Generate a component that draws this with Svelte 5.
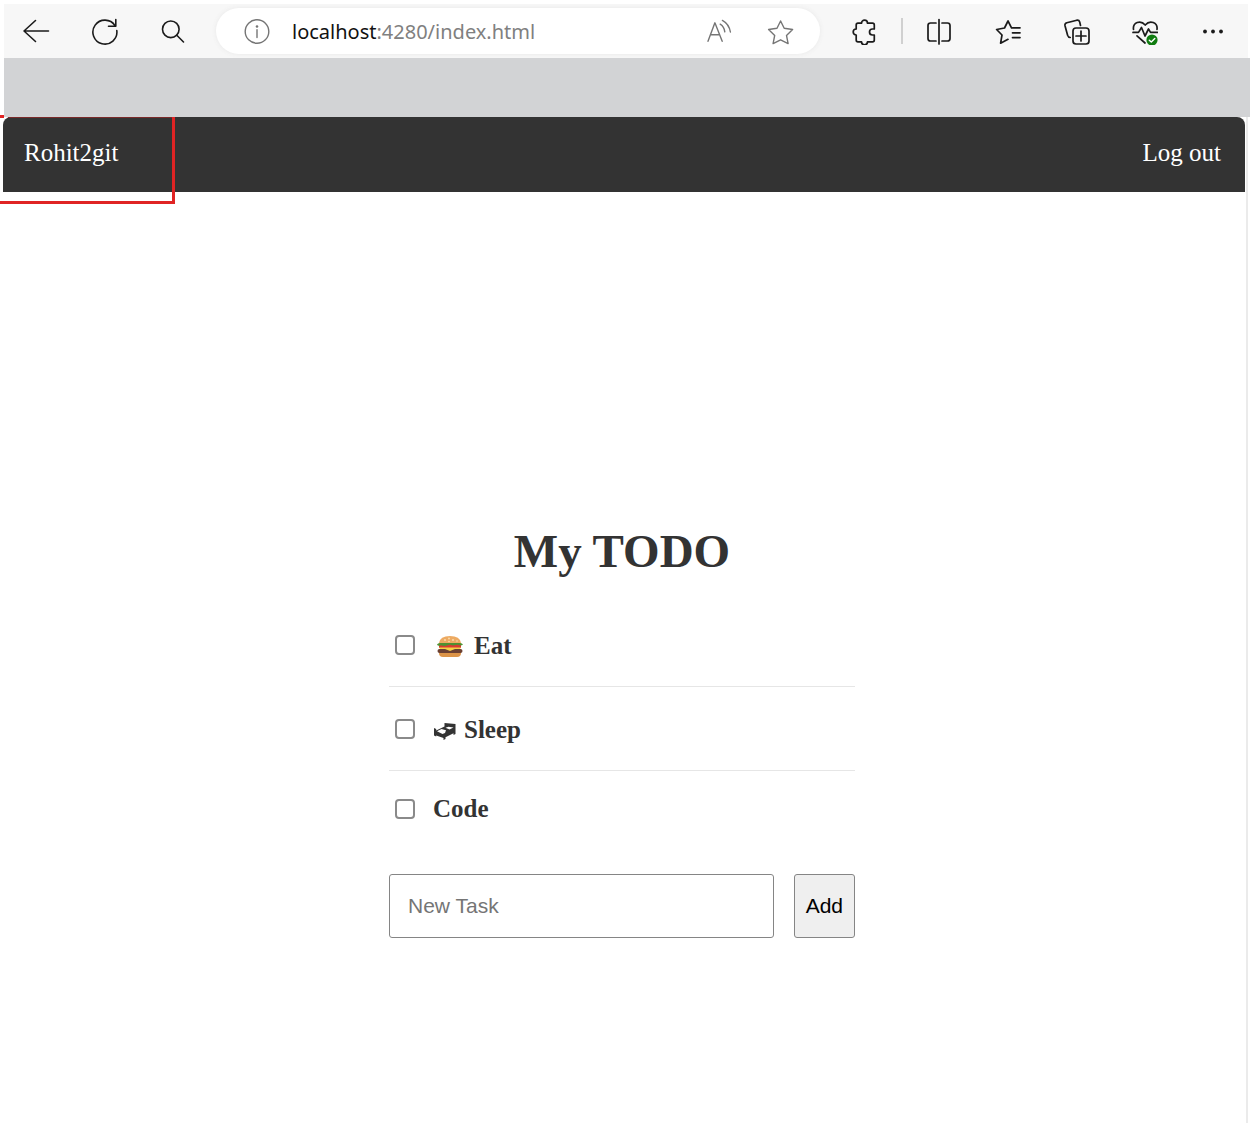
<script>
  let tasks = $state([
    { id: 1, title: 'Eat', icon: 'burger', done: false },
    { id: 2, title: 'Sleep', icon: 'bed', done: false },
    { id: 3, title: 'Code', icon: '', done: false }
  ]);
  let draft = $state('');

  function addTask(event) {
    event.preventDefault();
    const title = draft.trim();
    if (!title) return;
    tasks.push({ id: tasks.length + 1, title, icon: '', done: false });
    draft = '';
  }
</script>

<div class="page">
  <header class="toolbar">
    <button class="tool" aria-label="Back">
      <svg viewBox="0 0 28 28"><path d="M26.500 14H2M13.500 3.500L2 14L13.500 24.500" /></svg>
    </button>
    <button class="tool" aria-label="Refresh">
      <svg viewBox="0 0 28 28"><path d="M26.800 13.500A12 12 0 1 1 25 8.600M25.800 2.500V9.200H18.500" /></svg>
    </button>
    <button class="tool" aria-label="Search">
      <svg viewBox="0 0 28 28"><circle cx="12.800" cy="12.300" r="8.300" /><path d="M18.800 18.300L25.500 25" /></svg>
    </button>

    <div class="address">
      <svg class="muted" viewBox="0 0 28 28">
        <circle cx="14" cy="14.500" r="11.800" />
        <path d="M14 12.800V20.500" />
        <circle class="dot" cx="14" cy="9.500" r="1.300" />
      </svg>
      <a class="url" href="#top"><span class="host">localhost</span>:4280/index.html</a>
      <button class="tool small" aria-label="Read aloud">
        <svg class="muted" viewBox="0 0 28 28">
          <path d="M3 24.300L9.900 5.800L17.200 24.300M5.600 17.700H14.600M15.200 7.200Q19.200 9.800 19.800 14.800M17.400 3.400Q24 7 25.400 15" />
        </svg>
      </button>
      <button class="tool small" aria-label="Add to favorites">
        <svg class="muted" viewBox="0 0 28 28">
          <path d="M14.600 4L18.200 11.300L26.600 12.500L20.500 18.400L22.100 26.600L14.600 22.800L7.100 26.600L8.700 18.400L2.600 12.500L11 11.300Z" />
        </svg>
      </button>
    </div>

    <div class="extensions">
      <button class="tool" aria-label="Extensions">
        <svg class="strong" viewBox="0 0 28 28">
          <path d="M8 6.200H11.500A3 3 0 0 1 17.500 6.200H22.500Q24.300 6.200 24.300 8V12H22.500A3 3 0 0 0 22.500 18H24.300V23Q24.300 24.800 22.500 24.800H17.500A3 3 0 0 1 11.500 24.800H8Q6.200 24.800 6.200 23V18A3 3 0 0 1 6.200 12V8Q6.200 6.200 8 6.200Z" />
        </svg>
      </button>
      <span class="divider"></span>
      <button class="tool" aria-label="Split screen">
        <svg class="strong" viewBox="0 0 28 28">
          <path d="M10 6H4.500Q2 6 2 8.500V21.500Q2 24 4.500 24H10M13 2.500V27M16 6H21.500Q24 6 24 8.500V21.500Q24 24 21.500 24H16" />
        </svg>
      </button>
    </div>
    <button class="tool" aria-label="Favorites">
      <svg class="strong" viewBox="0 0 28 28">
        <path d="M18.500 10.800H26M18.500 15.800H26M18.500 20.600H26M17.500 10.800L14 4L10.500 11L2.600 12.500L8 18L6.600 26.200L14 22.300" />
      </svg>
    </button>
    <button class="tool" aria-label="Collections">
      <svg class="strong" viewBox="0 0 28 28">
        <path d="M18.500 8.500L17.700 5Q17 2.800 14.800 3.200L4.800 5.800Q2.500 6.500 3 8.800L5.600 18.200Q6.300 20.300 8.200 20.500" />
        <rect x="11" y="11" width="16" height="16" rx="3" />
        <path d="M19 14V24M14 19H24" />
      </svg>
    </button>
    <button class="tool" aria-label="Browser essentials">
      <svg class="strong" viewBox="0 0 28 28">
        <path d="M3.500 12.500C2.500 5.500 10.500 2.500 15.200 8C20 2.500 28 5.500 27 12.500M3 15.400H8.500L11.500 10.500L15 19L18.500 12L20.500 15.400H27.500M7 18.800L15 26" />
        <circle class="badge" cx="22" cy="23" r="5.600" />
        <path class="tick" d="M19.300 23.200L21.300 25.100L24.800 21.400" />
      </svg>
    </button>
    <button class="tool" aria-label="Settings and more">
      <svg viewBox="0 0 28 28">
        <circle class="dot" cx="7" cy="14.500" r="1.900" /><circle class="dot" cx="15" cy="14.500" r="1.900" /><circle class="dot" cx="23" cy="14.500" r="1.900" />
      </svg>
    </button>
  </header>
  <div class="strip"></div>

  <div class="frame">
    <nav>
      <a href="#profile">Rohit2git</a>
      <a href="#logout">Log out</a>
      <span class="marker"></span>
    </nav>

    <main>
      <section class="todo">
        <h1>My TODO</h1>
        <ul>
          {#each tasks as task (task.id)}
            <li>
              <input type="checkbox" id="task-{task.id}" bind:checked={task.done} />
              <label for="task-{task.id}" class:pictured={task.icon}>
                {#if task.icon === 'burger'}
                  <svg class="burger" viewBox="0 0 34 26" aria-hidden="true">
                    <path fill="#dc9448" d="M6 19H28V20Q28 24 24 24H10Q6 24 6 20Z" />
                    <path fill="#edaa62" d="M6 10Q7 3 17 3T28 10V12H6Z" />
                    <path fill="#d83b31" d="M6 11H28V15H6Z" />
                    <rect fill="#6b4032" x="4.500" y="16" width="25" height="4" rx="2" />
                    <path fill="#f5d044" d="M6 14.500H28L27 16H22L17 18L12 16H7Z" />
                    <path fill="#4f9231" d="M4 11.500Q5 9.500 8 10H26Q29 9.500 30 11.500Q28 13.500 25 11.800Q22 12 20 12.500Q17 11 14 12.500Q11 13.500 8 12.200Q5 13.500 4 11.500Z" />
                    <g fill="#fbe0b0"><circle cx="12" cy="7" r=".9" /><circle cx="16" cy="5.500" r=".9" /><circle cx="20" cy="7" r=".9" /><circle cx="16" cy="8.500" r=".8" /><circle cx="24" cy="8" r=".8" /></g>
                  </svg>
                {:else if task.icon === 'bed'}
                  <svg class="bed" viewBox="0 0 24 26" aria-hidden="true">
                    <path fill="#333" d="M1 11L3.200 12V13.500L11.500 9.500V6L22.500 7V17L20.500 18V16.200L12.500 20.300V22L10.500 23V21L3.200 18.500V19.500L1 18.500Z" />
                    <path fill="#fff" d="M4 14.300L8.500 12L13 13.200L12 16L9.500 17Z" />
                    <path fill="#fff" d="M12.500 10.800L15.500 9.800L20.500 10.600L16.500 12.600Z" />
                  </svg>
                {/if}
                <span>{task.title}</span>
              </label>
            </li>
          {/each}
        </ul>
        <form onsubmit={addTask}>
          <input type="text" aria-label="New Task" placeholder="New Task" bind:value={draft} />
          <button type="submit">Add</button>
        </form>
      </section>
    </main>
  </div>
</div>

<style>
  :global(body) {
    background: #fff;
  }

  .page {
    box-sizing: border-box;
    display: flex;
    flex-direction: column;
    min-height: 100vh;
    padding-top: 4px;
    font-family: 'Liberation Serif', 'Times New Roman', serif;
    color: #333;
  }

  .toolbar {
    display: flex;
    align-items: center;
    gap: 20px;
    height: 54px;
    margin: 0 3px 0 4px;
    padding: 0 12px 0 8px;
    box-sizing: border-box;
    background: #f7f7f7;
  }

  .tool {
    display: flex;
    flex: none;
    align-items: center;
    justify-content: center;
    width: 48px;
    height: 40px;
    padding: 0;
    border: 0;
    background: none;
  }

  .small {
    width: 40px;
  }

  .toolbar svg {
    flex: none;
    width: 28px;
    height: 28px;
    fill: none;
    stroke: #1b1b1b;
    stroke-width: 1.6;
    stroke-linecap: round;
    stroke-linejoin: round;
  }

  .toolbar svg.strong {
    stroke-width: 1.7;
  }

  .toolbar svg.muted {
    stroke: #757575;
    stroke-width: 1.4;
  }

  .toolbar .dot {
    fill: #1b1b1b;
    stroke: none;
  }

  .toolbar .muted .dot {
    fill: #757575;
  }

  .toolbar .badge {
    fill: #107c10;
    stroke: none;
  }

  .toolbar .tick {
    stroke: #fff;
    stroke-width: 1.4;
  }

  .address {
    display: flex;
    flex: 1;
    align-items: center;
    min-width: 0;
    height: 46px;
    padding: 0 20px 0 27px;
    gap: 21px;
    box-sizing: border-box;
    border-radius: 23px;
    background: #fff;
    box-shadow: 0 0 5px #e8e8e8;
  }

  .url {
    flex: 1;
    overflow: hidden;
    padding-top: 2px;
    color: #808080;
    font-family: 'Noto Sans', 'Open Sans', sans-serif;
    font-size: 20px;
    line-height: 30px;
    text-decoration: none;
    white-space: nowrap;
  }

  .host {
    color: #111;
  }

  .extensions {
    display: flex;
    align-items: center;
    gap: 13px;
  }

  .divider {
    width: 2px;
    height: 26px;
    background: #d0d0d0;
  }

  .strip {
    height: 59px;
    margin: 0 1px 0 4px;
    background: #d2d3d5;
  }

  .frame {
    display: flex;
    flex: 1;
    flex-direction: column;
    margin: 0 3px;
    border-right: 2px solid #ebebeb;
  }

  nav {
    position: relative;
    display: flex;
    align-items: center;
    justify-content: space-between;
    height: 75px;
    margin-right: 1px;
    padding: 0 24px 3px 21px;
    box-sizing: border-box;
    border-radius: 8px 8px 0 0;
    background: #333;
  }

  nav a {
    color: #fff;
    font-size: 25px;
    line-height: 30px;
    text-decoration: none;
  }

  .marker {
    position: absolute;
    top: 0;
    left: -3px;
    width: 175px;
    height: 87px;
    box-sizing: border-box;
    border: solid #e02424;
    border-width: 0 3px 3px 0;
    pointer-events: none;
  }

  .marker::before {
    content: '';
    position: absolute;
    top: -2px;
    left: 0;
    width: 4px;
    height: 3px;
    background: #e02424;
  }

  .marker::after {
    content: '';
    position: absolute;
    top: 0;
    left: 8px;
    right: 0;
    height: 1px;
    background: #7a2a2a;
  }

  main {
    display: flex;
    flex: 1;
    align-items: center;
    justify-content: center;
    padding: 148px 5px 0 0;
  }

  .todo {
    width: 100%;
    max-width: 466px;
  }

  h1 {
    margin: 0 0 26px;
    font-size: 47px;
    line-height: 52px;
    text-align: center;
  }

  ul {
    margin: 0 0 27px;
    padding: 0;
    list-style: none;
  }

  li {
    display: flex;
    align-items: center;
    gap: 18px;
    padding: 24px 0 24px 6px;
    border-bottom: 1px solid #e6e6e6;
  }

  li:last-child {
    border-bottom: 0;
  }

  li input {
    appearance: none;
    flex: none;
    width: 20px;
    height: 20px;
    margin: 0;
    border: 2px solid #8a8a8a;
    border-radius: 4px;
    background: #fff;
  }

  li input:checked {
    background: #0b6bcb;
  }

  label {
    display: flex;
    align-items: center;
    font-size: 25px;
    font-weight: bold;
    line-height: 28px;
  }

  .pictured {
    gap: 7px;
    min-height: 33px;
    padding-top: 2px;
  }

  .burger {
    width: 34px;
    height: 26px;
  }

  .bed {
    width: 24px;
    height: 26px;
  }

  form {
    display: flex;
    gap: 20px;
  }

  form input,
  form button {
    height: 64px;
    box-sizing: border-box;
    border: 1px solid #858585;
    border-radius: 3px;
    font-family: 'Liberation Sans', Arial, sans-serif;
    font-size: 21px;
  }

  form input {
    flex: 1;
    min-width: 0;
    padding: 0 18px;
    background: #fff;
  }

  form input::placeholder {
    color: #757575;
  }

  form button {
    flex: none;
    padding: 0 11px;
    background: #efefef;
    color: #000;
  }
</style>
